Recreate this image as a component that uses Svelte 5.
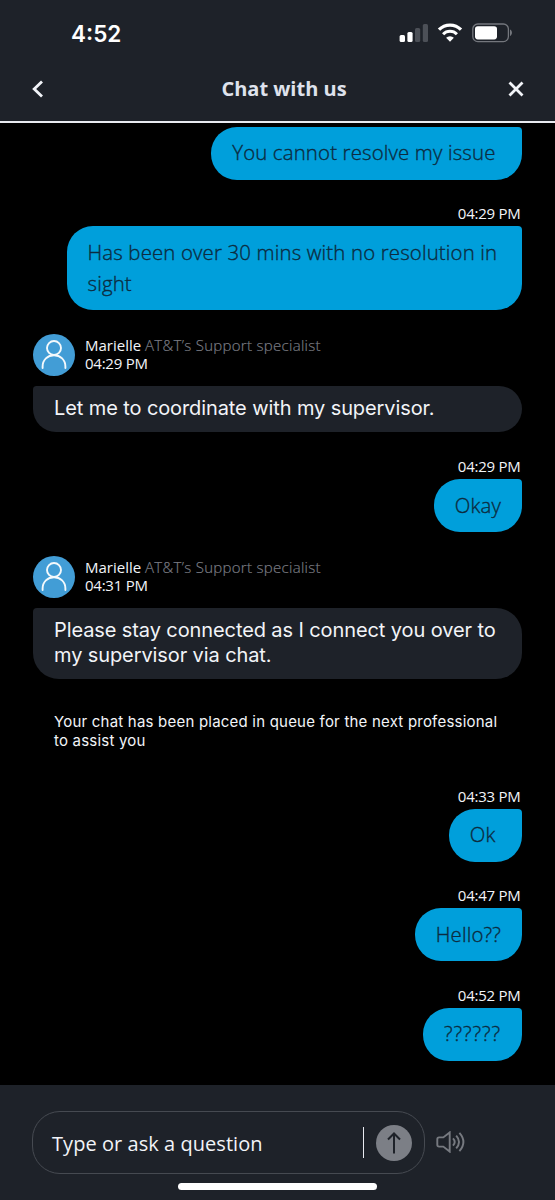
<script lang="ts">
  interface Message {
    id: number;
    from: 'me' | 'agent' | 'system';
    text: string;
    time?: string;
    author?: string;
    role?: string;
  }

  const agent = { author: 'Marielle', role: 'AT&T’s Support specialist' };

  // Trailing spaces are kept as typed, the bubbles grow with them
  const messages: Message[] = [
    { id: 1, from: 'me', text: 'You cannot resolve my issue\u00a0' },
    { id: 2, from: 'me', time: '04:29 PM', text: 'Has been over 30 mins with no resolution in sight' },
    { id: 3, from: 'agent', ...agent, time: '04:29 PM', text: 'Let me to coordinate with my supervisor.' },
    { id: 4, from: 'me', time: '04:29 PM', text: 'Okay' },
    { id: 5, from: 'agent', ...agent, time: '04:31 PM', text: 'Please stay connected as I connect you over to my supervisor via chat.' },
    { id: 6, from: 'system', text: 'Your chat has been placed in queue for the next professional to assist you' },
    { id: 7, from: 'me', time: '04:33 PM', text: 'Ok\u00a0' },
    { id: 8, from: 'me', time: '04:47 PM', text: 'Hello??' },
    { id: 9, from: 'me', time: '04:52 PM', text: '??????' }
  ];
</script>

<div class="phone">
  <header>
    <div class="status-bar">
      <span class="clock">4:52</span>
      <div class="status-icons">
        <svg class="signal" width="30" height="20" viewBox="0 0 30 20">
          <rect x="0.6" y="12" width="5.4" height="7" rx="1.5" fill="#fff" />
          <rect x="8.4" y="9" width="5.2" height="10" rx="1.5" fill="#fff" />
          <rect x="16" y="5" width="5.2" height="14" rx="1.5" fill="#4c5057" />
          <rect x="23.8" y="1" width="5.2" height="18" rx="1.5" fill="#4c5057" />
        </svg>
        <svg class="wifi" width="26" height="20" viewBox="0 0 26 20">
          <path d="M2 6.7a15.4 15.4 0 0 1 22 0" fill="none" stroke="#fff" stroke-width="3.3" />
          <path d="M6.1 11.2a9.6 9.6 0 0 1 13.8 0" fill="none" stroke="#fff" stroke-width="3" />
          <path d="M13 18.8l-3.9-4a5.6 5.6 0 0 1 7.8 0z" fill="#fff" />
        </svg>
        <svg class="battery" width="41" height="20" viewBox="0 0 41 20">
          <rect x="0.8" y="1" width="35.6" height="17.6" rx="5" fill="none" stroke="#74777d" stroke-width="1.3" />
          <rect x="3" y="3.2" width="22" height="13.2" rx="2.8" fill="#fff" />
          <path d="M38 6.6c2.6 1 2.6 5.4 0 6.4z" fill="#74777d" />
        </svg>
      </div>
    </div>
    <div class="title-bar">
      <button type="button" aria-label="Back">
        <svg width="12" height="18" viewBox="0 0 12 18">
          <path d="M10 1.5L2.2 9l7.8 7.5" fill="none" stroke="#f2f4f8" stroke-width="2.8" />
        </svg>
      </button>
      <h1>Chat with us</h1>
      <button type="button" aria-label="Close">
        <svg width="16" height="16" viewBox="0 0 16 16">
          <path d="M1.5 1.5l13 13M14.5 1.5l-13 13" fill="none" stroke="#f2f4f8" stroke-width="2.8" />
        </svg>
      </button>
    </div>
  </header>

  <main>
    {#each messages as message (message.id)}
      {#if message.from === 'me'}
        <div class="mine">
          {#if message.time}
            <time>{message.time}</time>
          {/if}
          <p class="bubble" class:marks={/^\?+$/.test(message.text)}>{message.text}</p>
        </div>
      {:else if message.from === 'agent'}
        <div class="agent">
          <div class="agent-head">
            <svg width="42" height="42" viewBox="0 0 42 42">
              <circle cx="21" cy="21" r="21" fill="#429dd6" />
              <g fill="none" stroke="#f4f9fc" stroke-width="1.9" stroke-linecap="round">
                <circle cx="21" cy="14" r="7" />
                <path d="M9.6 34v-1.4c0-6.6 5-11.4 11.4-11.4s11.4 4.8 11.4 11.4v1.4" />
              </g>
            </svg>
            <div class="agent-meta">
              <div>{message.author} <span class="role">{message.role}</span></div>
              <time>{message.time}</time>
            </div>
          </div>
          <p class="bubble">{message.text}</p>
        </div>
      {:else}
        <p class="system">{message.text}</p>
      {/if}
    {/each}
  </main>

  <footer>
    <div class="composer">
      <div class="input-box">
        <span class="placeholder">Type or ask a question</span>
        <span class="divider"></span>
        <button type="button" class="send" aria-label="Send">
          <svg width="36" height="36" viewBox="0 0 36 36">
            <circle cx="18" cy="18" r="18" fill="#7c7f86" />
            <path d="M18 28.5V8.5M12 14.5l6-6 6 6" fill="none" stroke="#1e2229" stroke-width="2" />
          </svg>
        </button>
      </div>
      <button type="button" aria-label="Sound">
        <svg width="30" height="22" viewBox="0 0 30 22">
          <g fill="none" stroke="#777a80" stroke-width="1.9">
            <path d="M1.3 8.2q0-1.8 1.8-1.8h4.2l6.4-5v19.2l-6.4-5H3.1q-1.8 0-1.8-1.8z" />
            <path d="M17 7.3q3.4 3.5 0 7.4M20.2 4.6q5.6 6.2 0 12.8M23.4 1.8q8 9 0 18.4" />
          </g>
        </svg>
      </button>
    </div>
    <div class="home-indicator"></div>
  </footer>
</div>

<style>
  :global(body) {
    margin: 0;
    background: #000;
  }

  .phone {
    display: flex;
    flex-direction: column;
    width: 555px;
    height: 1200px;
    overflow: hidden;
    background: #000;
    color: #f2f4f8;
    font-family: 'Open Sans', 'Noto Sans', sans-serif;
  }

  header {
    box-sizing: border-box;
    height: 123px;
    flex: none;
    background: #1e2229;
    border-bottom: 2px solid #e8eaf0;
  }

  .status-bar {
    display: flex;
    align-items: center;
    justify-content: space-between;
    height: 66px;
    padding: 0 42px 0 71px;
  }

  .clock {
    padding-top: 1px;
    color: #fff;
    font-family: Inter, sans-serif;
    font-size: 22.5px;
    font-weight: 600;
  }

  .status-icons {
    display: flex;
  }

  .signal {
    margin-right: 8px;
  }

  .wifi {
    margin-right: 9px;
  }

  .title-bar {
    display: flex;
    align-items: center;
    justify-content: space-between;
    height: 46px;
    padding: 0 31px 0 32px;
  }

  h1 {
    margin: 0 0 0 16px;
    color: #dfe2ec;
    font-size: 20px;
    font-weight: 700;
    line-height: 28px;
  }

  button {
    display: flex;
    padding: 0;
    border: none;
    background: none;
  }

  main {
    display: flex;
    flex-direction: column;
    height: 961.5px;
    flex: none;
    box-sizing: border-box;
    padding: 3.6px 33.5px 0 33px;
  }

  p {
    margin: 0;
  }

  time {
    font-size: 15px;
    line-height: 18px;
    letter-spacing: -0.25px;
  }

  .mine {
    display: flex;
    flex-direction: column;
    align-items: flex-end;
    margin-bottom: 24.8px;
  }

  .mine time {
    margin: 0 1px 4px 0;
  }

  .mine .bubble {
    box-sizing: border-box;
    max-width: 455px;
    padding: 10.2px 20.5px 11.8px 21px;
    border-radius: 26px 4px 26px 26px;
    background: #009fdb;
    color: #0c2b3f;
    font-size: 20.4px;
    font-weight: 300;
    line-height: 31px;
    letter-spacing: 0.15px;
    /* halfway between the light and regular cuts */
    -webkit-text-stroke: 0.35px #0c2b3f;
  }

  .mine .marks {
    letter-spacing: 0.9px;
  }

  .agent {
    margin: -1.5px 0 25.1px;
  }

  .agent-head {
    display: flex;
    gap: 10px;
    height: 52.5px;
  }

  .agent-meta {
    display: flex;
    flex-direction: column;
    padding-top: 2px;
    font-size: 15px;
    line-height: 18px;
  }

  .role {
    color: #7a7c83;
    font-weight: 300;
    letter-spacing: 0.3px;
    -webkit-text-stroke: 0.2px #7a7c83;
  }

  .agent .bubble {
    padding: 9.6px 15px 11.5px 21px;
    border-radius: 4px 26px 26px 26px;
    background: #1e2229;
    font-family: Inter, sans-serif;
    font-size: 20px;
    line-height: 25px;
    letter-spacing: -0.1px;
  }

  .system {
    padding: 0 21px;
    margin: 7.7px 0 36.7px;
    font-family: Inter, sans-serif;
    font-size: 15px;
    line-height: 19px;
    letter-spacing: 0.21px;
  }

  footer {
    display: flex;
    flex-direction: column;
    align-items: center;
    flex: 1;
    background: #1e2229;
  }

  .composer {
    display: flex;
    align-items: center;
    gap: 11px;
    align-self: stretch;
    padding: 26px 0 0 32px;
  }

  .input-box {
    display: flex;
    align-items: center;
    box-sizing: border-box;
    width: 393px;
    height: 63px;
    padding: 0 12px 0 19px;
    border: 1px solid #464a51;
    border-radius: 28px;
  }

  .placeholder {
    flex: 1;
    padding-top: 3px;
    font-size: 20px;
    letter-spacing: 0.05px;
  }

  .divider {
    width: 1px;
    height: 31px;
    margin-right: 12px;
    background: #e8eaf0;
  }

  .send {
    padding-top: 2px;
  }

  .home-indicator {
    width: 199px;
    height: 7px;
    margin-top: 9px;
    border-radius: 4px;
    background: #fff;
  }
</style>
